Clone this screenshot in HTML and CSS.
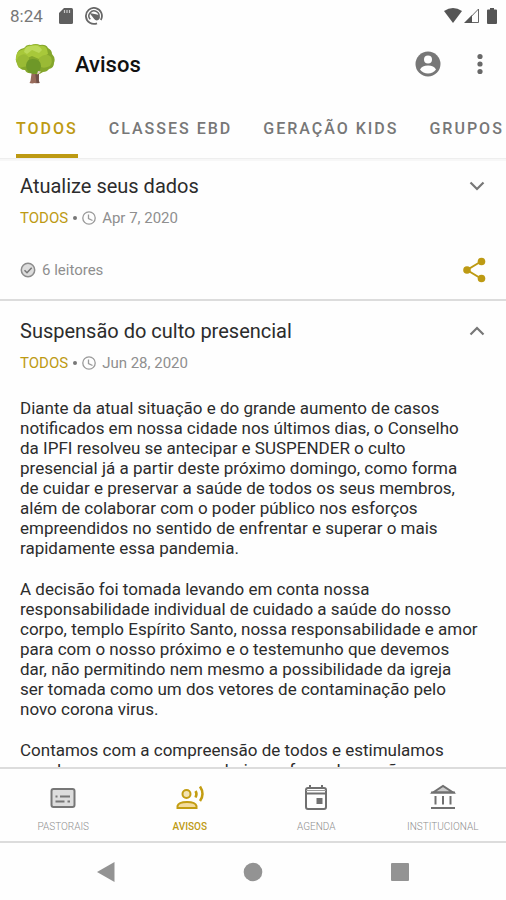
FILE: index.html
```html
<!DOCTYPE html>
<html lang="pt-BR">
<head>
  <meta charset="UTF-8">
  <meta name="viewport" content="width=device-width, initial-scale=1.0">
  <title>Avisos</title>
  <link rel="stylesheet" href="styles.css">
</head>
<body>
  <div class="status-bar">
    <span class="clock">8:24</span>
    <svg class="status-icon" width="14" height="16" viewBox="0 0 14 16"><path fill="#5f5f5f" d="M5 0h7.500q1.500 0 1.500 1.500v13q0 1.500-1.500 1.500h-11Q0 16 0 14.500V5z"/><path stroke="#c8c8c8" stroke-width="1.200" d="M5.500 2v3M8 2v3M10.500 2v3"/></svg>
    <svg class="status-icon" width="18" height="18" viewBox="0 0 18 18" fill="none" stroke="#686868"><path stroke-width="1.800" d="M12 16.300A8 8 0 1 1 15.800 13"/><path stroke-width="1.500" d="M5.300 12.300A5 5 0 1 1 13.500 11"/><path fill="#686868" stroke="none" d="M4.500 6l7.500 1.500a3 3 0 1 1-2.800 4.500z"/></svg>
    <div class="signals">
      <svg width="18" height="15" viewBox="0 0 18 15"><path fill="#555" d="M0 3Q9-3 18 3L9 15z"/></svg>
      <svg width="15" height="15" viewBox="0 0 15 15"><path fill="none" stroke="#666" d="M1.500 14.500h13V1z"/><path fill="#555" d="M0 15h8V7z"/></svg>
      <svg class="battery" width="10" height="16" viewBox="0 0 10 16"><path fill="#555" d="M3 0h4v1.500h2q1 0 1 1V15q0 1-1 1H1q-1 0-1-1V2.500q0-1 1-1h2z"/></svg>
    </div>
  </div>

  <header class="app-bar">
    <svg class="logo" width="40" height="40" viewBox="0 0 40 40">
      <path fill="#986b5b" d="M17 26l-1.500 11-1 2q3 .800 5 0 2.500.700 5 0l-.700-2.500L24 27z"/>
      <path fill="#715047" d="M20 28h4l-.200 8 .700 3h-3z"/>
      <path fill="#84a62b" d="M9 4q3-4 7-3 5-2 9 0 6-1 8 3 4 2 4 6 4 4 2 9 0 5-5 6-2 3-6 3-5 4-11 1-5 1-7-3-6 0-7-6-4-4-1-8-1-6 7-8z"/>
      <path fill="#a8c83a" d="M9 5q3-4 7-3.500 5-2 9 .500 5-1 7 3l1 5-9 5-7-3-9 4-6 3Q-1 11 4 7z"/>
      <path fill="#bcd95a" d="M9 8q1-7 8-6 7-2 10 4l-3 3-7-3-5 4z"/>
      <path fill="#9aba35" d="M3 13q7-6 11 1l-1 8-9 2q-4-5-1-11zM24 14q7-6 12-1 2 5-1 9-8 4-11-1z"/>
      <path fill="#6e9828" d="M11 21q1-7 8-6 7 1 7 7-1 8-8 8-7-2-7-9z"/>
      <path fill="#e2d1c7" d="M23 27l3 .500-2 2-2 1z"/>
    </svg>
    <h1>Avisos</h1>
    <button class="icon-btn account" aria-label="Conta">
      <svg width="26" height="26" viewBox="0 0 26 26"><circle cx="13" cy="13" r="12.500" fill="#777"/><circle cx="13" cy="8.500" r="4" fill="#fff"/><path fill="#fff" d="M5 18.500q2-4 8-4t8 4q-3 4-8 4t-8-4z"/></svg>
    </button>
    <button class="icon-btn" aria-label="Mais opções">
      <svg width="8" height="22" viewBox="0 0 8 22" fill="#686868"><circle cx="4" cy="3.500" r="2.600"/><circle cx="4" cy="11" r="2.600"/><circle cx="4" cy="18.500" r="2.600"/></svg>
    </button>
  </header>

  <nav class="tabs">
    <a class="tab active" href="#todos">TODOS</a>
    <a class="tab" href="#classes">CLASSES EBD</a>
    <a class="tab" href="#kids">GERAÇÃO KIDS</a>
    <a class="tab" href="#grupos">GRUPOS</a>
  </nav>

  <main class="notices">
    <article class="notice">
      <div class="notice-head">
        <h2>Atualize seus dados</h2>
        <button class="icon-btn" aria-label="Expandir">
          <svg width="16" height="10" viewBox="0 0 16 10"><path fill="none" stroke="#777" stroke-width="2.200" d="M1.500 1.500L8 8l6.500-6.500"/></svg>
        </button>
      </div>
      <div class="meta">
        <span class="tag">TODOS</span>
        <span class="dot"></span>
        <svg width="14" height="14" viewBox="0 0 14 14" fill="none" stroke="#999" stroke-width="1.300"><circle cx="7" cy="7" r="6.200"/><path d="M6.500 3.500v4l4 2"/></svg>
        <time datetime="2020-04-07">Apr 7, 2020</time>
      </div>
      <div class="notice-foot">
        <svg width="16" height="16" viewBox="0 0 16 16"><circle cx="8" cy="8" r="6.700" fill="#ddd" stroke="#8c8c8c" stroke-width="1.500"/><path fill="none" stroke="#777" stroke-width="1.500" d="M4.500 8.200L7 10.700l4.700-5"/></svg>
        <span>6 leitores</span>
        <button class="icon-btn" aria-label="Compartilhar">
          <svg width="24" height="26" viewBox="0 0 24 26" fill="#bd9a13"><path fill="none" stroke="#bd9a13" stroke-width="2" d="M19 4.500L5 13l14 8.500"/><circle cx="19.500" cy="4.500" r="3.800"/><circle cx="5" cy="13" r="3.800"/><circle cx="19.500" cy="21.500" r="3.800"/></svg>
        </button>
      </div>
    </article>

    <article class="notice">
      <div class="notice-head">
        <h2>Suspensão do culto presencial</h2>
        <button class="icon-btn" aria-label="Recolher">
          <svg width="16" height="10" viewBox="0 0 16 10"><path fill="none" stroke="#777" stroke-width="2.200" d="M1.500 8.500L8 2l6.500 6.500"/></svg>
        </button>
      </div>
      <div class="meta">
        <span class="tag">TODOS</span>
        <span class="dot"></span>
        <svg width="14" height="14" viewBox="0 0 14 14" fill="none" stroke="#999" stroke-width="1.300"><circle cx="7" cy="7" r="6.200"/><path d="M6.500 3.500v4l4 2"/></svg>
        <time datetime="2020-06-28">Jun 28, 2020</time>
      </div>
      <div class="notice-body">
        <p>Diante da atual situação e do grande aumento de casos<br>
        notificados em nossa cidade nos últimos dias, o Conselho<br>
        da IPFI resolveu se antecipar e SUSPENDER o culto<br>
        presencial já a partir deste próximo domingo, como forma<br>
        de cuidar e preservar a saúde de todos os seus membros,<br>
        além de colaborar com o poder público nos esforços<br>
        empreendidos no sentido de enfrentar e superar o mais<br>
        rapidamente essa pandemia.</p>
        <p>A decisão foi tomada levando em conta nossa<br>
        responsabilidade individual de cuidado a saúde do nosso<br>
        corpo, templo Espírito Santo, nossa responsabilidade e amor<br>
        para com o nosso próximo e o testemunho que devemos<br>
        dar, não permitindo nem mesmo a possibilidade da igreja<br>
        ser tomada como um dos vetores de contaminação pelo<br>
        novo corona virus.</p>
        <p>Contamos com a compreensão de todos e estimulamos<br>
        a cada um que permaneça hoje em fazendo oração</p>
      </div>
    </article>
  </main>

  <nav class="bottom-nav">
    <a class="nav-item" href="#pastorais">
      <svg width="28" height="28" viewBox="0 0 28 28"><rect x="2.500" y="5" width="23" height="18" rx="2" fill="#ddd" stroke="#777" stroke-width="2"/><path stroke="#777" stroke-width="2" d="M6.500 12.500h2M11 12.500h10M6.500 17.500h9M18.500 17.500h2.500"/></svg>
      PASTORAIS
    </a>
    <a class="nav-item active" href="#avisos">
      <svg width="28" height="28" viewBox="0 0 28 28" fill="none" stroke="#c39d12" stroke-width="2"><circle cx="10.500" cy="10" r="4" fill="#f3e4b3"/><path fill="#f3dc9e" d="M1.500 24v-2q1-4 9.500-4t9.500 4v2z"/><path d="M19.500 7q2 3 0 6.500" stroke-width="2.500"/><path d="M24 2.500q5 7.500 0 14.500" stroke-width="2.500"/></svg>
      AVISOS
    </a>
    <a class="nav-item" href="#agenda">
      <svg width="28" height="28" viewBox="0 0 28 28"><path fill="none" stroke="#707070" stroke-width="2" d="M8 1v4M20 1v4M4 9.500h20M6 4h16q2 0 2 2v17q0 2-2 2H6q-2 0-2-2V6q0-2 2-2z"/><path stroke="#999" d="M4 6.500h20"/><path fill="#707070" d="M14.500 14h6v6h-6z"/></svg>
      AGENDA
    </a>
    <a class="nav-item" href="#institucional">
      <svg width="28" height="28" viewBox="0 0 28 28"><path fill="#ccc" stroke="#707070" stroke-width="2" d="M4 8.500L14 2l10 6.500z"/><path stroke="#707070" stroke-width="2" d="M2 8.500h24M2 24h24M6.500 12v8.500M14 12v8.500M21.500 12v8.500"/></svg>
      INSTITUCIONAL
    </a>
  </nav>

  <div class="system-nav">
    <button class="icon-btn" aria-label="Voltar">
      <svg width="20" height="22" viewBox="0 0 20 22"><path fill="#939393" d="M1 11L18.500 1v20z"/></svg>
    </button>
    <button class="icon-btn" aria-label="Início">
      <svg width="20" height="20" viewBox="0 0 20 20"><circle cx="10" cy="10" r="9.300" fill="#939393"/></svg>
    </button>
    <button class="icon-btn" aria-label="Recentes">
      <svg width="20" height="20" viewBox="0 0 20 20"><rect x="1" y="1" width="18" height="18" rx="1" fill="#939393"/></svg>
    </button>
  </div>
</body>
</html>
```
FILE: styles.css
```css
:root {
  --gold: #bd9a13;
  --text-dark: #2c2c2c;
  --text-gray: #8f8f8f;
  --line: #dcdcdc;
}

* {
  box-sizing: border-box;
}

body {
  margin: 0;
  height: 100vh;
  display: flex;
  flex-direction: column;
  overflow: hidden;
  background-color: #fefefe;
  color: var(--text-dark);
  font-family: Roboto, sans-serif;
}

svg {
  display: block;
  flex: none;
}

h1, h2, p {
  margin: 0;
}

a {
  text-decoration: none;
}

.icon-btn {
  display: flex;
  align-items: center;
  justify-content: center;
  padding: 0;
  border: none;
  background: none;
  cursor: pointer;
}

.status-bar {
  display: flex;
  align-items: center;
  flex: none;
  height: 31px;
  padding: 0 9px 0 10px;
}

.clock {
  color: #777777;
  font-size: 17px;
}

.status-icon {
  margin-left: 12px;
}

.clock + .status-icon {
  margin-left: 16px;
}

.signals {
  display: flex;
  gap: 2px;
  margin-left: auto;
}

.battery {
  margin-left: 6px;
}

.app-bar {
  display: flex;
  align-items: center;
  flex: none;
  height: 66px;
  padding: 0 22px 0 15px;
}

.app-bar h1 {
  margin-left: 20px;
  color: #111111;
  font-size: 22px;
  font-weight: 500;
}

.account {
  margin-left: auto;
  margin-right: 35px;
}

.tabs {
  display: flex;
  flex: none;
  gap: 31px;
  height: 62px;
  padding: 6px 16px 0;
  overflow: hidden;
  white-space: nowrap;
  border-bottom: 1px solid #eeeeee;
}

.tab {
  display: flex;
  align-items: center;
  border-bottom: 4px solid transparent;
  color: #777777;
  font-size: 16px;
  font-weight: 500;
  letter-spacing: 2px;
}

.tab.active {
  border-bottom-color: var(--gold);
  border-radius: 2px 2px 0 0;
  color: var(--gold);
}

.notices {
  flex: 1;
  min-height: 0;
  overflow-y: auto;
  scrollbar-width: none;
  border-top: 2px solid #f7f7f7;
}

.notice {
  padding: 16px 20px;
  border-bottom: 2px solid var(--line);
}

.notice:first-child {
  padding-top: 11px;
}

.notice-head {
  display: flex;
  align-items: center;
  justify-content: space-between;
  padding-right: 1px;
}

.notice-head h2 {
  font-size: 20px;
  line-height: 28px;
  font-weight: 400;
}

.meta {
  display: flex;
  align-items: center;
  margin-top: 8px;
  color: var(--text-gray);
  font-size: 15px;
  line-height: 20px;
}

.tag {
  color: var(--gold);
}

.dot {
  width: 4px;
  height: 4px;
  margin: 0 5px;
  border-radius: 50%;
  background-color: #777777;
}

.meta time {
  margin-left: 6px;
}

.notice-foot {
  display: flex;
  align-items: center;
  gap: 6px;
  margin-top: 29px;
  color: var(--text-gray);
  font-size: 15px;
}

.notice-foot .icon-btn {
  margin-left: auto;
}

.notice-body {
  margin-top: 25px;
  font-size: 17px;
  line-height: 20px;
  white-space: nowrap;
}

.notice-body p + p {
  margin-top: 21px;
}

.bottom-nav {
  display: grid;
  grid-template-columns: repeat(4, 1fr);
  flex: none;
  height: 76px;
  border-top: 2px solid var(--line);
  border-bottom: 2px solid var(--line);
}

.nav-item {
  display: flex;
  flex-direction: column;
  align-items: center;
  gap: 7px;
  padding-top: 15px;
  color: var(--text-gray);
  font-size: 10px;
  font-weight: 300;
  line-height: 16px;
}

.nav-item.active {
  color: var(--gold);
  font-weight: 500;
}

.system-nav {
  display: flex;
  align-items: center;
  justify-content: space-between;
  flex: none;
  height: 57px;
  padding: 0 19%;
}
```
